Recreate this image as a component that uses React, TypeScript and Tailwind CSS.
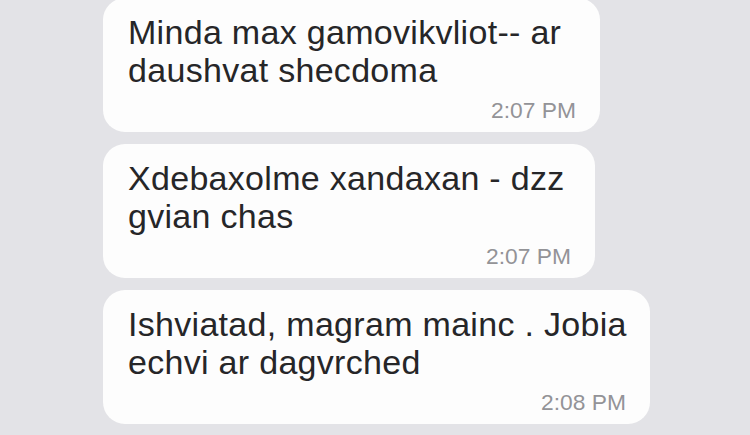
const messages = [
  { lines: ['Minda max gamovikvliot-- ar', 'daushvat shecdoma'], time: '2:07 PM', width: 'w-[497px]' },
  { lines: ['Xdebaxolme xandaxan - dzz', 'gvian chas'], time: '2:07 PM', width: 'w-[492px]' },
  { lines: ['Ishviatad, magram mainc . Jobia', 'echvi ar dagvrched'], time: '2:08 PM', width: 'w-[547px]' },
]

function Bubble({ lines, time, width }: { lines: string[]; time: string; width: string }) {
  return (
    <div className={`${width} rounded-[22px] bg-[#fdfdfd] pt-[15px] pb-[9px] pl-[25px] pr-[24px]`}>
      <p className="text-[34px] leading-[38px] tracking-[0.3px] text-[#262628]">
        {lines.map((l, i) => (
          <span key={i} className="block whitespace-nowrap">
            {l}
          </span>
        ))}
      </p>
      <div className="mt-[8px] text-right text-[22.8px] leading-[26px] text-[#939397]">{time}</div>
    </div>
  )
}

export default function App() {
  return (
    <main
      className="h-[435px] w-[750px] overflow-hidden bg-[#e3e3e7] pl-[103px]"
      style={{ fontFamily: '"Liberation Sans", Arial, sans-serif' }}
    >
      <div className="-mt-[2px] flex flex-col gap-[12px]">
        {messages.map((m, i) => (
          <Bubble key={i} {...m} />
        ))}
      </div>
    </main>
  )
}
